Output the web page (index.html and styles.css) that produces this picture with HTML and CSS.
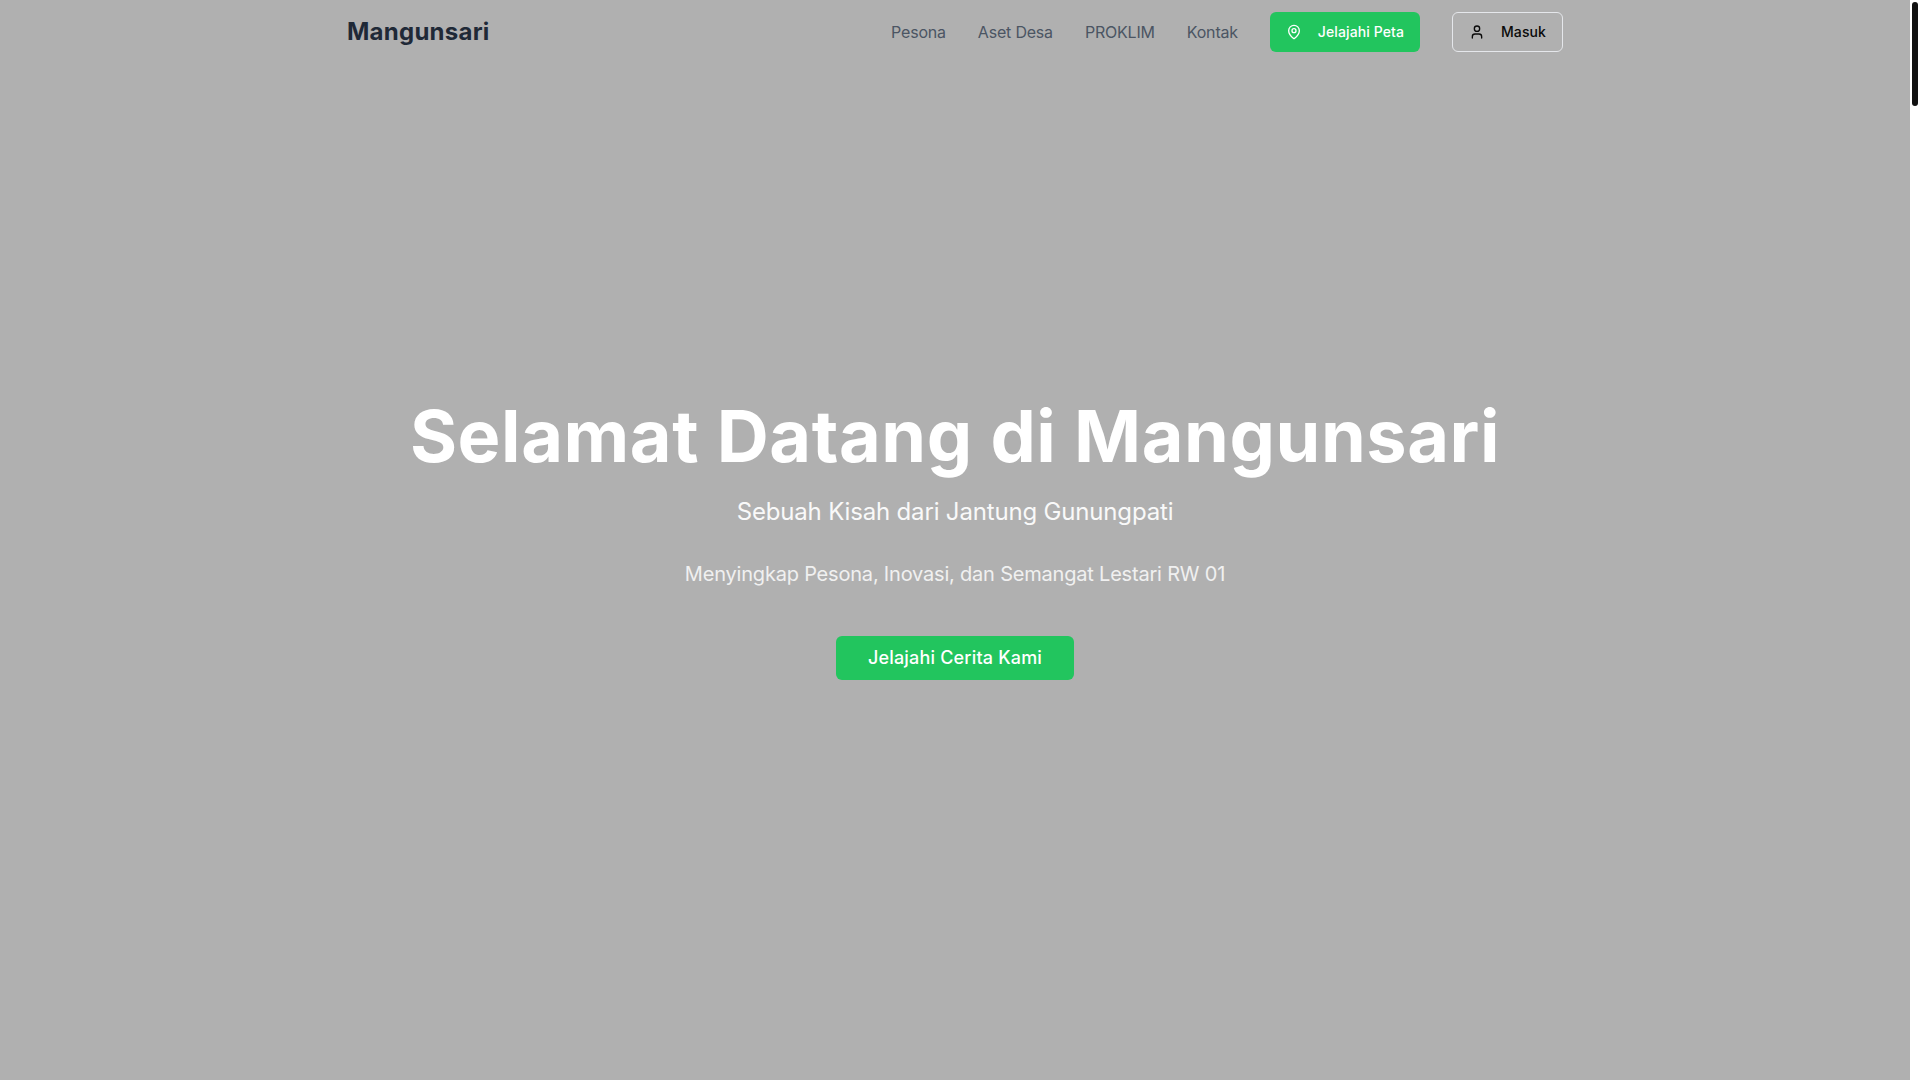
FILE: index.html
```html
<!DOCTYPE html>
<html lang="id">
<head>
<meta charset="utf-8">
<title>Mangunsari</title>
<link rel="stylesheet" href="styles.css">
</head>
<body>
<div class="page">
  <header class="nav">
    <div class="nav-inner">
      <a class="brand" href="#">Mangunsari</a>
      <nav class="nav-links">
        <a class="nav-link" href="#">Pesona</a>
        <a class="nav-link" href="#">Aset Desa</a>
        <a class="nav-link" href="#">PROKLIM</a>
        <a class="nav-link" href="#">Kontak</a>
        <a class="btn btn-map" href="#">
          <svg class="icon" viewBox="0 0 24 24" fill="none" stroke="currentColor" stroke-width="2" stroke-linecap="round" stroke-linejoin="round"><path d="M20 10c0 5-5.5 10.2-7.4 11.8a1 1 0 0 1-1.2 0C9.5 20.2 4 15 4 10a8 8 0 0 1 16 0"/><circle cx="12" cy="10" r="3"/></svg>
          <span>Jelajahi Peta</span>
        </a>
        <a class="btn btn-login" href="#">
          <svg class="icon" viewBox="0 0 24 24" fill="none" stroke="currentColor" stroke-width="2" stroke-linecap="round" stroke-linejoin="round"><path d="M19 21v-2a4 4 0 0 0-4-4H9a4 4 0 0 0-4 4v2"/><circle cx="12" cy="7" r="4"/></svg>
          <span>Masuk</span>
        </a>
      </nav>
    </div>
  </header>
  <main class="hero">
    <h1 class="hero-title">Selamat Datang di Mangunsari</h1>
    <p class="hero-sub">Sebuah Kisah dari Jantung Gunungpati</p>
    <p class="hero-tag">Menyingkap Pesona, Inovasi, dan Semangat Lestari RW 01</p>
    <a class="hero-cta" href="#">Jelajahi Cerita Kami</a>
  </main>
</div>
<div class="scrollbar"><div class="scrollbar-thumb"></div></div>
</body>
</html>
```
FILE: styles.css
```css
* { box-sizing: border-box; }
html, body { margin: 0; height: 100%; overflow: hidden; }
body {
  display: flex;
  font-family: "Inter", "Noto Sans", sans-serif;
  background: #fff;
}
a { text-decoration: none; }
.page {
  position: relative;
  flex: 1;
  min-width: 0;
  height: 1080px;
  background: #b0b0b0;
}
.scrollbar {
  width: 10px;
  height: 1080px;
  padding: 2px;
  background: #fff;
}
.scrollbar-thumb {
  width: 6px;
  height: 104px;
  border-radius: 3px;
  background: #111;
}
.nav {
  position: absolute;
  top: 0;
  left: 0;
  right: 0;
}
.nav-inner {
  display: flex;
  align-items: center;
  justify-content: space-between;
  max-width: 1280px;
  height: 64px;
  margin: 0 auto;
  padding: 0 32px;
}
.brand {
  font-size: 24px;
  font-weight: 700;
  line-height: 32px;
  letter-spacing: 0.25px;
  color: #1f2937;
}
.nav-links {
  display: flex;
  align-items: center;
  gap: 32px;
}
.nav-link {
  font-size: 16px;
  line-height: 24px;
  letter-spacing: -0.2px;
  color: #4b5563;
}
.btn {
  display: flex;
  align-items: center;
  gap: 16px;
  height: 40px;
  padding: 0 16px;
  border-radius: 6px;
  font-size: 14px;
  font-weight: 500;
  line-height: 20px;
  letter-spacing: 0.1px;
}
.btn-map {
  background: #22c55e;
  color: #fff;
}
.btn-login {
  border: 1px solid #e5e7eb;
  color: #0a0a0a;
}
.icon {
  width: 16px;
  height: 16px;
  flex: none;
}
.hero {
  display: flex;
  flex-direction: column;
  align-items: center;
  justify-content: center;
  height: 100%;
  text-align: center;
}
.hero-title {
  margin: 0;
  font-size: 72px;
  font-weight: 700;
  line-height: 72px;
  letter-spacing: 0.57px;
  color: #fff;
}
.hero-sub {
  margin: 24px 0 0;
  font-size: 24px;
  line-height: 32px;
  letter-spacing: -0.17px;
  color: #f9f9f9;
}
.hero-tag {
  margin: 32px 0 0;
  font-size: 20px;
  line-height: 28px;
  letter-spacing: -0.2px;
  color: #f0f0f0;
}
.hero-cta {
  margin-top: 48px;
  height: 44px;
  padding: 0 32px;
  border-radius: 6px;
  background: #22c55e;
  color: #fff;
  font-size: 18px;
  font-weight: 500;
  line-height: 44px;
  letter-spacing: 0.18px;
}
```
